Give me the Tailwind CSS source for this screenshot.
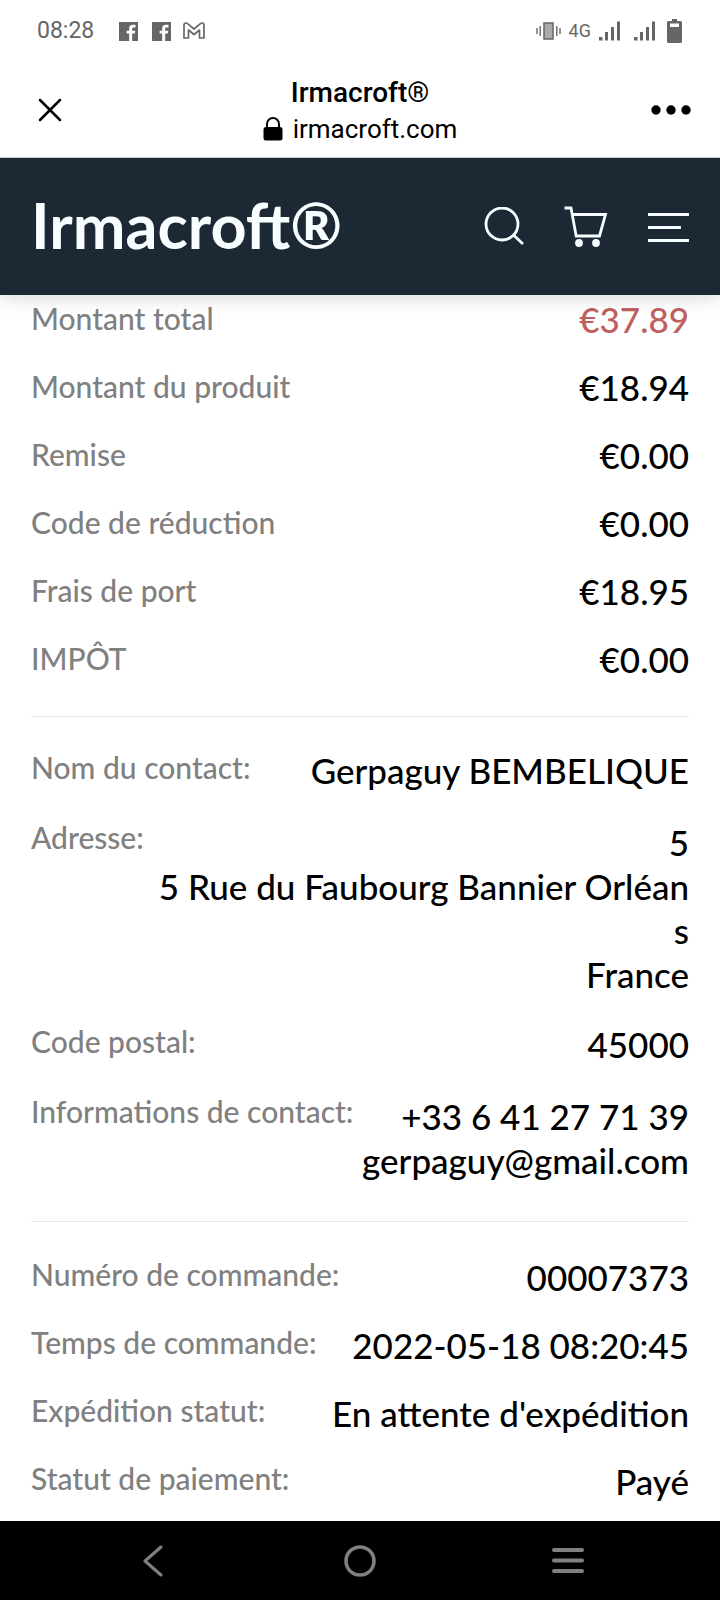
<!DOCTYPE html>
<html lang="fr">
<head>
<meta charset="utf-8">
<meta name="viewport" content="width=device-width, initial-scale=1">
<title>Irmacroft®</title>
<script src="https://cdn.jsdelivr.net/npm/@tailwindcss/browser@4"></script>
</head>
<body class="flex min-h-screen flex-col bg-white font-['Lato',sans-serif] text-black">

<!-- Status bar -->
<div class="flex h-[62px] items-center justify-between pr-[38px] pl-[37px] font-['Roboto',sans-serif] text-[#666]">
  <div class="flex items-center">
    <span class="text-[23px] leading-6">08:28</span>
    <svg class="ml-[25px] size-[19px]" viewBox="0 0 18 18" fill="#666" aria-hidden="true"><path fill-rule="evenodd" d="M0 0H18V18H12.5V11H15L15.4 8.2H12.5V6.5Q12.5 5.2 14 5.2H15.6V2.6H13.2Q9.6 2.6 9.6 6V8.2H7.2V11H9.6V18H0Z"/></svg>
    <svg class="ml-[14px] size-[19px]" viewBox="0 0 18 18" fill="#666" aria-hidden="true"><path fill-rule="evenodd" d="M0 0H18V18H12.5V11H15L15.4 8.2H12.5V6.5Q12.5 5.2 14 5.2H15.6V2.6H13.2Q9.6 2.6 9.6 6V8.2H7.2V11H9.6V18H0Z"/></svg>
    <svg class="ml-3 h-[18px] w-[22px]" viewBox="0 0 22 18" fill="none" stroke="#666" stroke-width="1.7" stroke-linejoin="round" aria-hidden="true"><path d="M1 3.2Q1 1 3 1Q3.8 1 4.6 1.7L11 7L17.4 1.7Q18.2 1 19 1Q21 1 21 3.2V16H16.5V8L11 12.5L5.5 8V16H1Z"/></svg>
  </div>
  <div class="flex items-center">
    <svg class="h-[18px] w-[25px]" viewBox="0 0 25 18" aria-hidden="true"><rect x="8" y="1" width="9" height="16" fill="#aaa" stroke="#666" stroke-width="1.5"/><path d="M1 6V12M4.2 4V14M20.8 4V14M24 6V12" stroke="#666" stroke-width="1.4"/></svg>
    <span class="ml-2 text-[18px] leading-6">4G</span>
    <svg class="ml-2 h-5 w-[22px]" viewBox="0 0 22 20" fill="#666" aria-hidden="true"><path d="M0 16H3.5V19.5H0ZM6 11H9V19.5H6ZM12 6H15V19.5H12ZM18 0.5H21V19.5H18Z"/></svg>
    <svg class="ml-[13px] h-5 w-[22px]" viewBox="0 0 22 20" fill="#666" aria-hidden="true"><path d="M0 16H3.5V19.5H0ZM6 11H9V19.5H6ZM12 6H15V19.5H12ZM18 0.5H21V19.5H18Z"/></svg>
    <svg class="ml-[11px] h-6 w-[15px]" viewBox="0 0 15 24" fill="#666" aria-hidden="true"><path fill-rule="evenodd" d="M5 0H10V2H13.5Q15 2 15 3.5V22.5Q15 24 13.5 24H1.5Q0 24 0 22.5V3.5Q0 2 1.5 2H5ZM3 4.5V8H12V4.5Z"/></svg>
  </div>
</div>

<!-- In-app browser bar -->
<div class="relative z-20 flex h-24 items-center justify-between border-b border-[#c8ccd0] bg-white pr-[29px] pl-[38px] font-['Roboto',sans-serif]">
  <button type="button" aria-label="Fermer" class="w-[31px]"><svg class="size-6" viewBox="0 0 24 24" fill="none" stroke="#000" stroke-width="2.5" stroke-linecap="round"><path d="M2 2L22 22M22 2L2 22"/></svg></button>
  <div class="flex flex-col items-center pt-[2px]">
    <div class="text-[28px] leading-[37px] font-medium">Irmacroft®</div>
    <div class="flex items-center gap-[10px] text-[26px] leading-9">
      <svg class="h-6 w-5" viewBox="0 0 20 24" aria-hidden="true"><rect x="0.5" y="10" width="19" height="13.5" rx="2.5"/><path d="M4 11V7A6 6 0 0 1 16 7V11" fill="none" stroke="#000" stroke-width="2"/></svg>
      <span>irmacroft.com</span>
    </div>
  </div>
  <button type="button" aria-label="Plus d'options"><svg class="h-[10px] w-10" viewBox="0 0 40 10"><circle cx="5" cy="5" r="4.7"/><circle cx="20" cy="5" r="4.7"/><circle cx="35" cy="5" r="4.7"/></svg></button>
</div>

<!-- Shop header -->
<header class="z-10 flex h-[137px] items-center justify-between bg-[#1c2833] px-[31px] text-white shadow-[0_0_20px_rgba(0,0,0,0.2)]">
  <a href="#" class="pb-1 text-[63px] leading-[72px] font-bold text-[#f8fdff]">Irmacroft®</a>
  <div class="flex items-center gap-10 text-[#f5fcff]">
    <button type="button" aria-label="Rechercher"><svg class="size-10" viewBox="0 0 40 40" fill="none" stroke="currentColor" stroke-width="2.8"><circle cx="18" cy="17" r="16"/><path d="M29.5 28L39 37"/></svg></button>
    <button type="button" aria-label="Panier"><svg class="h-[42px] w-11" viewBox="0 0 44 42" fill="none" stroke="currentColor" stroke-width="2.8"><path d="M0.5 2H7L12.2 30H35.5L41.5 8.500H8.5"/><circle cx="15" cy="37" r="3.9" fill="currentColor" stroke="none"/><circle cx="32" cy="37" r="3.9" fill="currentColor" stroke="none"/></svg></button>
    <button type="button" aria-label="Menu"><svg class="h-8 w-[41px]" viewBox="0 0 41 32" fill="none" stroke="currentColor" stroke-width="3"><path d="M0 3.5H41M0 16.5H33M0 29.5H41"/></svg></button>
  </div>
</header>

<!-- Order details -->
<main class="grow px-[31px] text-right text-[35px] leading-11 font-medium whitespace-nowrap">
  <dl class="flex flex-col gap-6 border-b border-[#e8e8e8] pt-[2px] pb-[35px]">
    <div class="flex justify-between"><dt class="text-[30px] leading-[42px] text-[#808080]">Montant total</dt><dd class="text-[#c0605e]">€37.89</dd></div>
    <div class="flex justify-between"><dt class="text-[30px] leading-[42px] text-[#808080]">Montant du produit</dt><dd>€18.94</dd></div>
    <div class="flex justify-between"><dt class="text-[30px] leading-[42px] text-[#808080]">Remise</dt><dd>€0.00</dd></div>
    <div class="flex justify-between"><dt class="text-[30px] leading-[42px] text-[#808080]">Code de réduction</dt><dd>€0.00</dd></div>
    <div class="flex justify-between"><dt class="text-[30px] leading-[42px] text-[#808080]">Frais de port</dt><dd>€18.95</dd></div>
    <div class="flex justify-between"><dt class="text-[30px] leading-[42px] text-[#808080]">IMPÔT</dt><dd>€0.00</dd></div>
  </dl>
  <dl class="flex flex-col gap-6 border-b border-[#e8e8e8] pt-[29px] pb-[39px]">
    <div class="flex justify-between"><dt class="text-[30px] leading-[42px] text-[#808080]">Nom du contact:</dt><dd class="pt-[2px]">Gerpaguy BEMBELIQUE</dd></div>
    <div class="flex justify-between"><dt class="text-[30px] leading-[42px] text-[#808080]">Adresse:</dt><dd class="pt-1">5<br>5 Rue du Faubourg Bannier Orléan<br>s<br>France</dd></div>
    <div class="flex justify-between"><dt class="text-[30px] leading-[42px] text-[#808080]">Code postal:</dt><dd class="pt-[2px]">45000</dd></div>
    <div class="flex justify-between"><dt class="text-[30px] leading-[42px] text-[#808080]">Informations de contact:</dt><dd class="pt-1">+33 6 41 27 71 39<br>gerpaguy@gmail.com</dd></div>
  </dl>
  <dl class="flex flex-col gap-[22px] pt-[31px]">
    <div class="flex justify-between"><dt class="text-[30px] leading-[42px] text-[#808080]">Numéro de commande:</dt><dd class="pt-[2px]">00007373</dd></div>
    <div class="flex justify-between"><dt class="text-[30px] leading-[42px] text-[#808080]">Temps de commande:</dt><dd class="pt-[2px]">2022-05-18 08:20:45</dd></div>
    <div class="flex justify-between"><dt class="text-[30px] leading-[42px] text-[#808080]">Expédition statut:</dt><dd class="pt-[2px]">En attente d'expédition</dd></div>
    <div class="flex justify-between"><dt class="text-[30px] leading-[42px] text-[#808080]">Statut de paiement:</dt><dd class="pt-[2px]">Payé</dd></div>
  </dl>
</main>

<!-- System navigation -->
<nav class="flex h-[79px] items-center justify-between bg-black px-[136px]">
  <button type="button" aria-label="Retour"><svg class="size-8" viewBox="0 0 32 32" fill="none" stroke="#808080" stroke-width="3" stroke-linecap="round" stroke-linejoin="round"><path d="M25 2L9 16L25 30"/></svg></button>
  <button type="button" aria-label="Accueil"><svg class="size-8" viewBox="0 0 32 32" fill="none" stroke="#808080" stroke-width="3.5"><circle cx="16" cy="16" r="14"/></svg></button>
  <button type="button" aria-label="Applications récentes"><svg class="size-8" viewBox="0 0 32 32" fill="none" stroke="#808080" stroke-width="4" stroke-linecap="round"><path d="M2 5H30M2 15.500H30M2 26H30"/></svg></button>
</nav>
</body>
</html>
